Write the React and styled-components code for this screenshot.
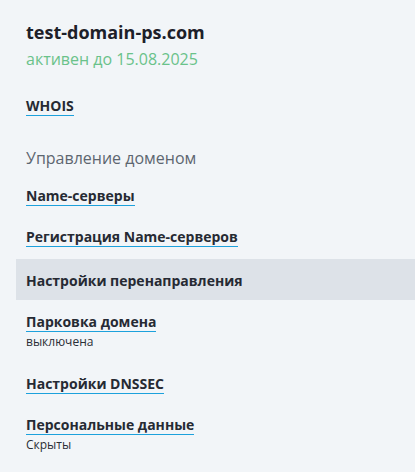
import styled, { createGlobalStyle } from "styled-components";

const GlobalStyle = createGlobalStyle`
  html, body {
    margin: 0;
    background: #f2f5f8;
  }
  body {
    font-family: "Open Sans", "Liberation Sans", sans-serif;
    color: #262a33;
  }
`;

const Page = styled.div`
  width: 415px;
  min-height: 472px;
  padding: 20px 0 0 16px;
  box-sizing: border-box;
`;

const Header = styled.div`
  padding: 0 10px;
`;

const DomainName = styled.h1`
  margin: 0;
  font-size: 18px;
  line-height: 24px;
  font-weight: 700;
  color: #1d2029;
`;

const Status = styled.div`
  margin-top: 4px;
  font-size: 16px;
  line-height: 22px;
  color: #6ac28a;
`;

const SectionTitle = styled.div`
  margin: 21px 0 6px;
  padding: 0 10px;
  font-size: 16px;
  line-height: 22px;
  color: #5d6670;
`;

const Menu = styled.div`
  display: flex;
  flex-direction: column;
  margin-top: ${(p) => p.$top || 0}px;
`;

const Item = styled.div`
  display: flex;
  flex-direction: column;
  align-items: flex-start;
  padding: ${(p) => (p.$active ? "13px 10px 10px" : "12px 10px 10px")};
  margin: ${(p) => (p.$active ? "2px 0 1px" : "0")};
  background: ${(p) => (p.$active ? "#dde2e8" : "transparent")};
`;

const Link = styled.a`
  font-size: 14px;
  line-height: 18px;
  font-weight: 700;
  color: #262a33;
  text-decoration: none;
  border-bottom: ${(p) => (p.$active ? "none" : "1px solid #1da1dc")};
`;

const Note = styled.div`
  font-size: 12px;
  line-height: 16px;
  color: #2a2e36;
  margin: 2px 0 3px;
`;

const items = [
  { label: "Name-серверы" },
  { label: "Регистрация Name-серверов" },
  { label: "Настройки перенаправления", active: true },
  { label: "Парковка домена", note: "выключена" },
  { label: "Настройки DNSSEC" },
  { label: "Персональные данные", note: "Скрыты" },
];

export default function App() {
  return (
    <>
      <GlobalStyle />
      <Page>
        <Header>
          <DomainName>test-domain-ps.com</DomainName>
          <Status>активен до 15.08.2025</Status>
        </Header>
        <Menu $top={15}>
          <Item>
            <Link href="#">WHOIS</Link>
          </Item>
        </Menu>
        <SectionTitle>Управление доменом</SectionTitle>
        <Menu>
          {items.map((it) => (
            <Item key={it.label} $active={it.active}>
              <Link href="#" $active={it.active}>
                {it.label}
              </Link>
              {it.note && <Note>{it.note}</Note>}
            </Item>
          ))}
        </Menu>
      </Page>
    </>
  );
}
